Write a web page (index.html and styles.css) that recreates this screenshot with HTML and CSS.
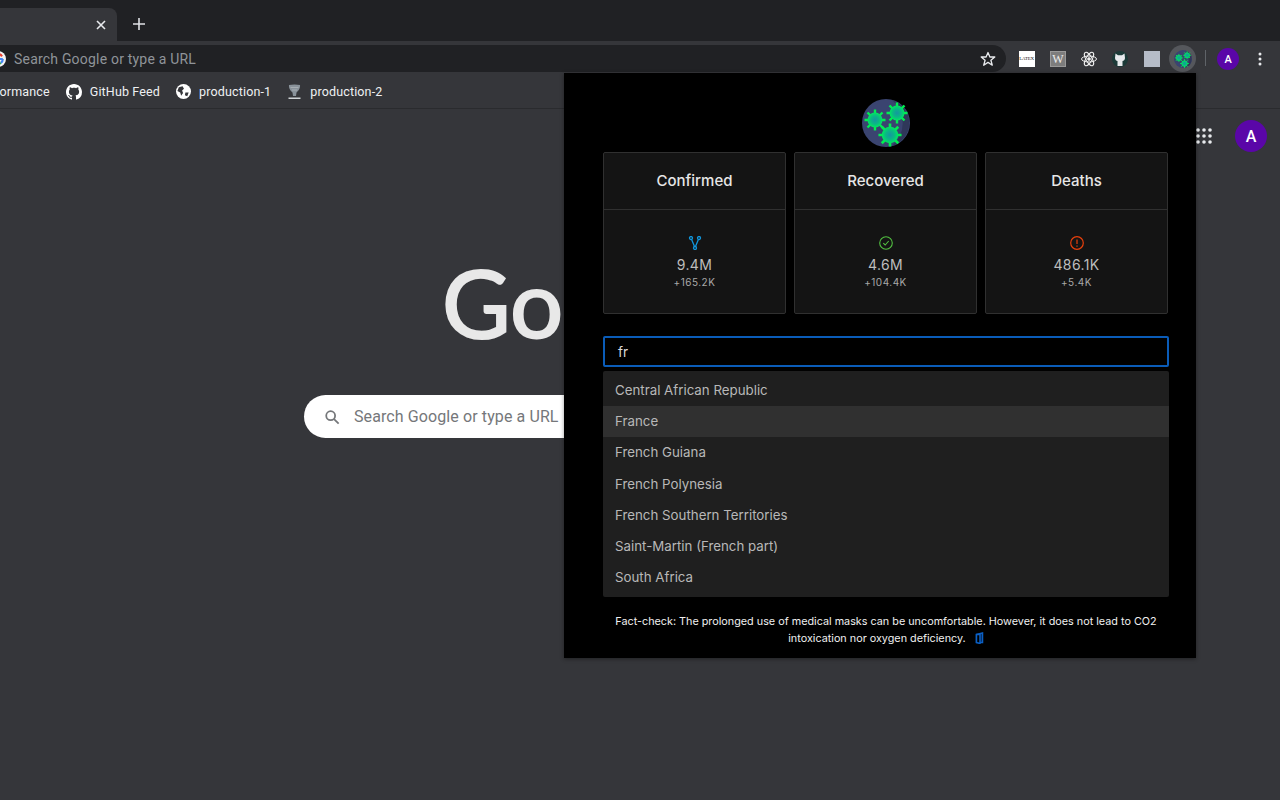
FILE: index.html
```html
<!DOCTYPE html>
<html lang="en">
<head>
    <meta charset="UTF-8">
    <meta name="viewport" content="width=device-width, initial-scale=1.0">
    <title>New Tab</title>
    <link rel="stylesheet" href="styles.css">
</head>
<body>
    <svg class="defs" width="0" height="0">
        <defs>
            <radialGradient id="virusFill">
                <stop offset="0" stop-color="#1596a0"/>
                <stop offset="0.55" stop-color="#0ab884"/>
                <stop offset="1" stop-color="#00e860"/>
            </radialGradient>
            <g id="virus">
                <g stroke="#00f050" stroke-width="2.400">
                    <path d="M0-6V-10.500M0 6V10.500M-6 0H-10.500M6 0H10.500M-4.500-4.500L-7.500-7.500M4.500 4.500L7.500 7.500M-4.500 4.500L-7.500 7.500M4.500-4.500L7.500-7.500"/>
                </g>
                <circle r="7.500" fill="url(#virusFill)"/>
            </g>
            <g id="logoIcon">
                <circle cx="24" cy="24" r="24" fill="#3a4470"/>
                <path d="M30 1A24 24 0 0 1 30 47A30 30 0 0 0 30 1Z" fill="#2f3759"/>
                <use href="#virus" transform="translate(13 21)"/>
                <use href="#virus" transform="translate(35 14)"/>
                <use href="#virus" transform="translate(28 36) scale(1.100)"/>
            </g>
        </defs>
    </svg>

    <div class="tabstrip">
        <div class="tab">
            <svg class="tab-close" width="10" height="10" viewBox="0 0 10 10"><path d="M1 1L9 9M9 1L1 9" stroke="#e8eaed" stroke-width="1.600"/></svg>
        </div>
        <svg class="new-tab" width="14" height="14" viewBox="0 0 14 14"><path d="M7 1V13M1 7H13" stroke="#dfe1e5" stroke-width="1.600"/></svg>
    </div>

    <div class="toolbar">
        <div class="omnibox">
            <div class="omni-left">
                <svg class="omni-g" width="16" height="16" viewBox="0 0 16 16" fill="none" stroke-width="2.200">
                    <circle cx="8" cy="8" r="8" fill="#f4f4f4" stroke="none"/>
                    <path d="M3.900 5.500A4.800 4.800 0 0 1 12 5.300" stroke="#ea4335"/>
                    <path d="M12.800 8A4.800 4.800 0 0 1 10.800 11.900M8.500 8H12.800" stroke="#4285f4"/>
                    <path d="M10.800 11.900A4.800 4.800 0 0 1 3.900 10.500" stroke="#34a853"/>
                </svg>
                <span class="omni-text">Search Google or type a URL</span>
            </div>
            <svg class="star" width="16" height="16" viewBox="0 0 16 16"><path d="M8 1.500L9.900 6H14.800L10.900 9.200L12.300 14.200L8 11.400L3.700 14.200L5.100 9.200L1.200 6H6.100Z" fill="none" stroke="#e8eaed" stroke-width="1.300" stroke-linejoin="round"/></svg>
        </div>
        <div class="ext-icons">
            <span class="ext"><span class="ext-tex">LATEX</span></span>
            <span class="ext"><span class="ext-w">W</span></span>
            <span class="ext">
                <svg width="16" height="16" viewBox="0 0 16 16" fill="none" stroke="#eee" stroke-width="1">
                    <ellipse cx="8" cy="8" rx="7.500" ry="3"/>
                    <ellipse cx="8" cy="8" rx="7.500" ry="3" transform="rotate(60 8 8)"/>
                    <ellipse cx="8" cy="8" rx="7.500" ry="3" transform="rotate(120 8 8)"/>
                    <circle cx="8" cy="8" r="1.300" fill="#eee"/>
                </svg>
            </span>
            <span class="ext">
                <svg width="16" height="16" viewBox="0 0 16 16">
                    <circle cx="8" cy="8" r="8" fill="#1c3a38"/>
                    <path d="M3.500 2.500L6 4.200H10L12.500 2.500L13 7C13 9 11.500 10 10.500 10V15H5.500V10C4.500 10 3 9 3 7Z" fill="#e8eaed"/>
                </svg>
            </span>
            <span class="ext"><span class="ext-blank"></span></span>
            <span class="ext ext-active">
                <svg width="18" height="18" viewBox="0 0 48 48"><use href="#logoIcon"/></svg>
            </span>
        </div>
        <span class="tool-sep"></span>
        <span class="avatar-small">A</span>
        <svg class="menu-dots" width="4" height="14" viewBox="0 0 4 14" fill="#e8eaed"><circle cx="2" cy="2" r="1.500"/><circle cx="2" cy="7" r="1.500"/><circle cx="2" cy="12" r="1.500"/></svg>
    </div>

    <div class="bookmarks">
        <span class="bm bm-cut">formance</span>
        <span class="bm">
            <svg width="16" height="16" viewBox="0 0 16 16" fill="#fff"><path d="M8 0C3.580 0 0 3.580 0 8c0 3.540 2.290 6.530 5.470 7.590.4.070.55-.17.55-.38 0-.19-.01-.82-.01-1.490-2.010.37-2.530-.49-2.690-.94-.09-.23-.48-.94-.82-1.130-.28-.15-.68-.52-.01-.53.630-.01 1.080.58 1.230.82.720 1.210 1.870.870 2.330.660.070-.520.280-.870.510-1.070-1.780-.2-3.640-.890-3.640-3.950 0-.870.310-1.590.820-2.150-.08-.2-.36-1.020.08-2.120 0 0 .67-.21 2.200.820.640-.180 1.320-.270 2-.270s1.360.090 2 .270c1.530-1.040 2.200-.820 2.200-.820.440 1.100.160 1.920.080 2.120.510.560.820 1.270.820 2.150 0 3.070-1.870 3.750-3.650 3.950.290.250.540.730.540 1.480 0 1.070-.010 1.930-.010 2.200 0 .210.150.460.550.380A8.010 8.010 0 0 0 16 8c0-4.420-3.580-8-8-8z"/></svg>
            GitHub Feed
        </span>
        <span class="bm">
            <svg width="15" height="15" viewBox="0 0 16 16"><circle cx="8" cy="8" r="8" fill="#fff"/><path d="M3 3.500L7 2.500L8.500 5L6.500 7L7.500 9.500L5.500 12.500L4.500 9L1.500 7.500ZM10 9H13.500L12 13L9.500 12Z" fill="#35363a"/></svg>
            production-1
        </span>
        <span class="bm">
            <svg width="15" height="16" viewBox="0 0 15 16"><path d="M2 1C5 .3 10 .3 13 1C13.500 4 11.500 7 9.500 8.500L9 12H6L5.500 8.500C3.500 7 1.500 4 2 1Z" fill="#89929a"/><path d="M3.500 3.500H11.500M5 6H10" stroke="#aeb5ba" stroke-width=".8"/><path d="M1.500 13.500H13.500V15H1.500Z" fill="#d0d4d7"/></svg>
            production-2
        </span>
    </div>

    <main class="ntp">
        <div class="ntp-top">
            <svg class="apps" width="16" height="16" viewBox="0 0 16 16" fill="#e8eaed">
                <circle cx="2" cy="2" r="1.800"/><circle cx="8" cy="2" r="1.800"/><circle cx="14" cy="2" r="1.800"/>
                <circle cx="2" cy="8" r="1.800"/><circle cx="8" cy="8" r="1.800"/><circle cx="14" cy="8" r="1.800"/>
                <circle cx="2" cy="14" r="1.800"/><circle cx="8" cy="14" r="1.800"/><circle cx="14" cy="14" r="1.800"/>
            </svg>
            <span class="avatar-big">A</span>
        </div>
        <div class="ntp-center">
            <div class="google-logo">Goo</div>
            <div class="ntp-search">
                <svg width="16" height="16" viewBox="0 0 18 18" fill="none" stroke="#75777a" stroke-width="2"><circle cx="7.500" cy="7.500" r="5"/><path d="M11 11L16.500 16.500"/></svg>
                <span>Search Google or type a URL</span>
            </div>
        </div>
    </main>

    <div class="popup">
        <svg class="popup-logo" width="48" height="48" viewBox="0 0 48 48"><use href="#logoIcon"/></svg>

        <div class="cards">
            <div class="card">
                <div class="card-head">Confirmed</div>
                <div class="card-body">
                    <svg width="14" height="14" viewBox="0 0 14 14" fill="none" stroke="#1296db" stroke-width="1.300"><circle cx="3" cy="2" r="1.500"/><circle cx="11" cy="2" r="1.500"/><circle cx="7" cy="12" r="1.500"/><path d="M3.600 3.400L6.500 10.500M10.400 3.400L7.500 10.500"/></svg>
                    <div class="count">9.4M</div>
                    <div class="delta">+165.2K</div>
                </div>
            </div>
            <div class="card">
                <div class="card-head">Recovered</div>
                <div class="card-body">
                    <svg width="14" height="14" viewBox="0 0 14 14" fill="none" stroke="#52c041" stroke-width="1.100"><circle cx="7" cy="7" r="6.300"/><path d="M4.300 7.200L6.200 9L9.700 5"/></svg>
                    <div class="count">4.6M</div>
                    <div class="delta">+104.4K</div>
                </div>
            </div>
            <div class="card">
                <div class="card-head">Deaths</div>
                <div class="card-body">
                    <svg width="14" height="14" viewBox="0 0 14 14" fill="none" stroke="#e8400c" stroke-width="1.200"><circle cx="7" cy="7" r="6.300"/><path d="M7 3.500V8M7 9.500V10.700"/></svg>
                    <div class="count">486.1K</div>
                    <div class="delta">+5.4K</div>
                </div>
            </div>
        </div>

        <div class="search-box">fr</div>

        <ul class="results">
            <li>Central African Republic</li>
            <li class="active">France</li>
            <li>French Guiana</li>
            <li>French Polynesia</li>
            <li>French Southern Territories</li>
            <li>Saint-Martin (French part)</li>
            <li>South Africa</li>
        </ul>

        <p class="fact">Fact-check: The prolonged use of medical masks can be uncomfortable. However, it does not lead to CO2 intoxication nor oxygen deficiency.
            <svg class="fact-icon" width="10" height="12" viewBox="0 0 10 12" fill="none" stroke="#0b5fc4" stroke-width="1.500"><path d="M2.500 2.500L8.500 1V10.500H2.500Z" fill="#06224a"/><path d="M2.500 2.500H6V11.500L2.500 10.500Z" fill="#000"/></svg>
        </p>
    </div>
</body>
</html>
```

FILE: styles.css
```css
* {
    box-sizing: border-box;
}
html, body {
    height: 100%;
}
body {
    margin: 0;
    display: flex;
    flex-direction: column;
    position: relative;
    overflow: hidden;
    font-family: Roboto, "Liberation Sans", sans-serif;
    background-color: #35363a;
}
.defs {
    position: absolute;
}

/* browser chrome */
.tabstrip {
    height: 41px;
    flex: none;
    display: flex;
    align-items: flex-end;
    background-color: #202124;
}
.tab {
    width: 117px;
    height: 33px;
    padding-right: 11px;
    display: flex;
    align-items: center;
    justify-content: flex-end;
    background-color: #35363a;
    border-top-right-radius: 8px;
}
.new-tab {
    margin: 0 0 10px 15px;
}
.toolbar {
    height: 31px;
    flex: none;
    display: flex;
    align-items: flex-end;
    padding-right: 17px;
    background-color: #35363a;
}
.omnibox {
    width: 1006px;
    height: 27px;
    flex: none;
    display: flex;
    align-items: center;
    justify-content: space-between;
    padding-right: 10px;
    background-color: #202124;
    border-radius: 0 14px 14px 0;
}
.omni-left {
    display: flex;
    align-items: center;
    gap: 8px;
    margin-left: -10px;
}
.omni-text {
    font-size: 14px;
    letter-spacing: 0.2px;
    color: #8f9499;
}
.ext-icons {
    display: flex;
    align-items: center;
    height: 27px;
    margin-left: 5px;
}
.ext {
    width: 31.25px;
    height: 27px;
    display: flex;
    align-items: center;
    justify-content: center;
}
.ext-active {
    width: 27px;
    margin-left: 2px;
    border-radius: 50%;
    background-color: #55575c;
}
.ext-tex {
    width: 16px;
    height: 16px;
    display: block;
    background-color: #fff;
    color: #222;
    font-family: "Liberation Serif", serif;
    font-size: 5px;
    letter-spacing: -0.2px;
    line-height: 16px;
    text-align: center;
}
.ext-w {
    width: 16px;
    height: 16px;
    display: block;
    background-color: #7d7d7d;
    border: 1px solid #999;
    color: #eee;
    font-family: "Liberation Serif", serif;
    font-size: 12px;
    line-height: 14px;
    text-align: center;
}
.ext-blank {
    width: 16px;
    height: 16px;
    display: block;
    background-color: #b6bcc8;
}
.tool-sep {
    width: 1px;
    height: 16px;
    margin: 0 11px 6px 9px;
    background-color: #5f6368;
}
.avatar-small {
    width: 22px;
    height: 22px;
    margin-bottom: 2px;
    display: flex;
    align-items: center;
    justify-content: center;
    border-radius: 50%;
    background-color: #5a06a8;
    color: #fff;
    font-size: 11px;
    font-weight: 500;
}
.menu-dots {
    margin: 0 0 6px 19px;
}
.bookmarks {
    height: 37px;
    flex: none;
    display: flex;
    align-items: center;
    gap: 16px;
    padding-top: 3px;
    border-bottom: 1px solid #2a2b2e;
    background-color: #35363a;
}
.bm {
    display: flex;
    align-items: center;
    gap: 8px;
    font-size: 12.5px;
    letter-spacing: 0.15px;
    color: #eef0f2;
}
.bm-cut {
    margin-left: -5px;
}

/* new tab page */
.ntp {
    flex: 1;
    display: flex;
    flex-direction: column;
}
.ntp-top {
    display: flex;
    justify-content: flex-end;
    align-items: center;
    gap: 23px;
    padding: 11px 13px 0 0;
}
.apps {
    flex: none;
}
.avatar-big {
    width: 32px;
    height: 32px;
    display: flex;
    align-items: center;
    justify-content: center;
    border-radius: 50%;
    background-color: #5a06a8;
    color: #fff;
    font-size: 16px;
    font-weight: 500;
}
.ntp-center {
    width: 584px;
    margin: 0 0 0 304px;
}
.google-logo {
    margin-top: 94px;
    padding-left: 138px;
    font-family: Lato, sans-serif;
    font-size: 94px;
    line-height: 112px;
    color: #e8e8e8;
    -webkit-text-stroke: 2px #e8e8e8;
    white-space: nowrap;
}
.ntp-search {
    height: 43px;
    margin-top: 37px;
    padding-left: 20px;
    display: flex;
    align-items: center;
    gap: 14px;
    border-radius: 22px;
    background-color: #fff;
    font-size: 16px;
    letter-spacing: 0.1px;
    color: #75777a;
}

/* extension popup */
.popup {
    position: absolute;
    left: 564px;
    top: 73px;
    width: 632px;
    height: 585px;
    padding: 26px 27px 0 39px;
    background-color: #000;
    box-shadow: 0 1px 4px rgba(0, 0, 0, 0.4);
    font-family: Inter, "Liberation Sans", sans-serif;
}
.popup-logo {
    display: block;
    margin: 0 auto 5px;
}
.cards {
    display: grid;
    grid-template-columns: repeat(3, 183px);
    gap: 8px;
}
.card {
    height: 162px;
    background-color: #141414;
    border: 1px solid #303030;
    border-radius: 2px;
}
.card-head {
    height: 57px;
    padding-bottom: 1px;
    display: flex;
    align-items: center;
    justify-content: center;
    border-bottom: 1px solid #303030;
    font-size: 15px;
    font-weight: 500;
    color: #e6e6e6;
}
.card-body {
    padding-top: 26px;
    display: flex;
    flex-direction: column;
    align-items: center;
}
.count {
    margin-top: 5px;
    font-size: 14px;
    letter-spacing: 0.4px;
    line-height: 20px;
    color: #bdbdbd;
}
.delta {
    font-size: 10px;
    letter-spacing: 0.5px;
    line-height: 15px;
    color: #a8a8a8;
}
.search-box {
    height: 31px;
    margin-top: 22px;
    padding-left: 13px;
    display: flex;
    align-items: center;
    border: 2px solid #0a5cb8;
    border-radius: 2px;
    font-size: 13.5px;
    color: #d9d9d9;
}
.results {
    list-style: none;
    margin: 4px 0 0;
    padding: 4px 0;
    background-color: #1f1f1f;
    border-radius: 2px;
}
.results li {
    height: 31.17px;
    padding: 0 0 1px 12px;
    display: flex;
    align-items: center;
    font-size: 13.3px;
    color: #b8b8b8;
}
.results li.active {
    background-color: #303030;
}
.fact {
    margin: 16px 0 0;
    padding: 0 4px;
    font-size: 10.8px;
    line-height: 17px;
    text-align: center;
    color: #f0f0f0;
}
.fact-icon {
    margin-left: 5px;
    vertical-align: -2px;
}
```
